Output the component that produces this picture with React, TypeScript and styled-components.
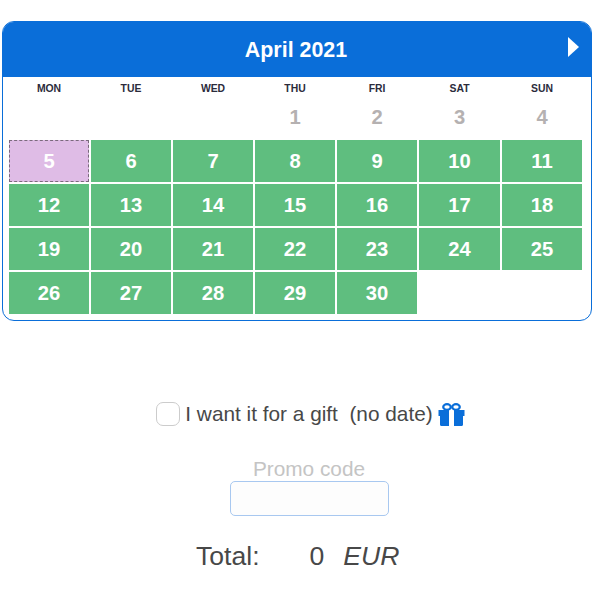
import * as React from 'react'
import styled, { createGlobalStyle } from 'styled-components'

const GlobalStyle = createGlobalStyle`
  html, body {
    margin: 0;
    padding: 0;
    background: #fff;
    font-family: "Liberation Sans", Arial, sans-serif;
  }
`

const Page = styled.div`
  width: 600px;
  height: 600px;
  padding: 21px 8px 0 2px;
  box-sizing: border-box;
  color: #484848;
`

const Calendar = styled.div`
  width: 590px;
  height: 300px;
  box-sizing: border-box;
  border: 1px solid #0a6ed9;
  border-radius: 12px;
  overflow: hidden;
`

const Header = styled.div`
  height: 55px;
  padding: 1px 2px 0 0;
  box-sizing: border-box;
  background: #0a6ed9;
  display: flex;
  align-items: center;
  justify-content: center;
  position: relative;
  color: #fff;
  font-size: 21.4px;
  font-weight: bold;
`

const NextArrow = styled.span`
  position: absolute;
  right: 12px;
  top: 15px;
  width: 0;
  height: 0;
  border-left: 11px solid #fff;
  border-top: 10px solid transparent;
  border-bottom: 10px solid transparent;
`

const Body = styled.div`
  padding: 0 9px 0 6px;
`

const Grid = styled.div`
  display: grid;
  grid-template-columns: 80px 80px 80px 80px 80px 81px 80px;
  gap: 2px;
`

const WeekDay = styled.div`
  height: 22px;
  display: flex;
  align-items: center;
  justify-content: center;
  font-size: 10.4px;
  font-weight: bold;
  color: #2b2b3b;
`

const LeadDay = styled.div`
  height: 37px;
  padding-bottom: 5px;
  box-sizing: border-box;
  display: flex;
  align-items: center;
  justify-content: center;
  font-size: 20.2px;
  font-weight: bold;
  color: #b5b1b1;
`

const Day = styled.div<{ $today?: boolean }>`
  height: 42px;
  box-sizing: border-box;
  display: flex;
  align-items: center;
  justify-content: center;
  font-size: 20.2px;
  font-weight: bold;
  color: #fff;
  background: ${p => (p.$today ? '#dfbce6' : '#5fbe7f')};
  border: ${p => (p.$today ? '1px dashed #7a6a7c' : 'none')};
`

const GiftRow = styled.label`
  display: flex;
  align-items: center;
  justify-content: center;
  margin-top: 80px;
  height: 26px;
  padding-left: 27px;
  font-size: 20.8px;
  white-space: pre;
`

const CheckBox = styled.span`
  width: 24px;
  height: 24px;
  box-sizing: border-box;
  border: 1px solid #ccc;
  border-radius: 7px;
  margin-right: 5px;
`

const GiftSvg = styled.svg`
  width: 27px;
  height: 23px;
  margin-left: 5px;
  color: #0a6ed9;
`

const PromoBlock = styled.div`
  display: flex;
  flex-direction: column;
  align-items: center;
  margin-top: 30px;
  padding-left: 24px;
`

const PromoLabel = styled.div`
  font-size: 20.8px;
  line-height: 24px;
  color: #c4c4c4;
`

const PromoInput = styled.input`
  width: 159px;
  height: 35px;
  box-sizing: border-box;
  border: 1px solid #a8c8f0;
  border-radius: 5px;
  background: #fdfdfd;
  outline: none;
`

const Total = styled.div`
  display: flex;
  align-items: baseline;
  margin-top: 26px;
  padding-left: 194px;
  font-size: 26.6px;
  line-height: 29px;
`

const TotalValue = styled.span`
  margin-left: 50px;
`

const Currency = styled.em`
  margin-left: 19px;
`

const GiftIcon = () => (
  <GiftSvg viewBox="0 0 27 23">
    <g fill="none" stroke="currentColor" strokeWidth="2.2">
      <ellipse cx="9" cy="4" rx="3.8" ry="2.8" />
      <ellipse cx="18" cy="4" rx="3.8" ry="2.8" />
    </g>
    <path
      fill="currentColor"
      fillRule="evenodd"
      d="M0.5 7 H26.5 V13 H25 V21.5 C25 22.3 24.5 23 23.5 23 H3.5 C2.5 23 2 22.3 2 21.5 V13 H0.5 Z M11 7 V23 H16 V7 Z"
    />
  </GiftSvg>
)

const weekDays = ['MON', 'TUE', 'WED', 'THU', 'FRI', 'SAT', 'SUN']
const lead = ['', '', '', '1', '2', '3', '4']
const days = Array.from({ length: 26 }, (_, i) => i + 5)

export default function App() {
  return (
    <Page>
      <GlobalStyle />
      <Calendar>
        <Header>
          April 2021
          <NextArrow />
        </Header>
        <Body>
          <Grid>
            {weekDays.map(d => (
              <WeekDay key={d}>{d}</WeekDay>
            ))}
            {lead.map((d, i) => (
              <LeadDay key={i}>{d}</LeadDay>
            ))}
            {days.map(d => (
              <Day key={d} $today={d === 5}>
                {d}
              </Day>
            ))}
          </Grid>
        </Body>
      </Calendar>
      <GiftRow>
        <CheckBox />
        {'I want it for a gift  (no date)'}
        <GiftIcon />
      </GiftRow>
      <PromoBlock>
        <PromoLabel>Promo code</PromoLabel>
        <PromoInput />
      </PromoBlock>
      <Total>
        Total:
        <TotalValue>0</TotalValue>
        <Currency>EUR</Currency>
      </Total>
    </Page>
  )
}
